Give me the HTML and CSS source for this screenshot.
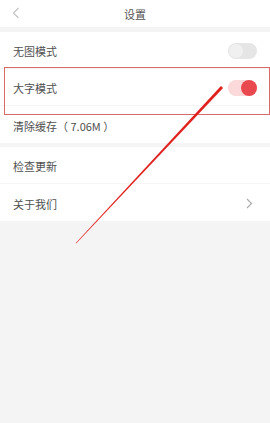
FILE: index.html
```html
<!DOCTYPE html>
<html lang="zh-CN">
<head>
  <meta charset="UTF-8">
  <meta name="viewport" content="width=device-width, initial-scale=1.0">
  <title>设置</title>
  <link rel="stylesheet" href="styles.css">
</head>
<body>
  <div class="page">
    <!-- 顶部栏 -->
    <div class="topbar">
      <span class="back">
        <svg width="8" height="12" viewBox="0 0 8 12"><path d="M6.5 1 L1.5 6 L6.5 11" fill="none" stroke="#c4c4c4" stroke-width="1.2"/></svg>
      </span>
      <span class="title">设置</span>
    </div>

    <!-- 第一组 -->
    <div class="group">
      <div class="row">
        <span class="label">无图模式</span>
        <span class="switch"><span class="knob"></span></span>
      </div>
      <div class="row">
        <span class="label">大字模式</span>
        <span class="switch on"><span class="knob"></span></span>
      </div>
      <div class="row">
        <span class="label">清除缓存（ 7.06M ）</span>
      </div>
    </div>

    <!-- 第二组 -->
    <div class="group">
      <div class="row">
        <span class="label">检查更新</span>
      </div>
      <div class="row">
        <span class="label">关于我们</span>
        <svg class="arrow-right" width="7" height="11" viewBox="0 0 7 11"><path d="M1 1 L5.5 5.5 L1 10" fill="none" stroke="#a8a8a8" stroke-width="1.1"/></svg>
      </div>
    </div>
  </div>

  <!-- 标注 -->
  <div class="mark-box"></div>
  <svg class="mark-arrow" width="270" height="423" viewBox="0 0 270 423">
    <polygon points="75.6,243.2 76.4,243.2 223.1,88 220.9,86" fill="#e0221f"/>
  </svg>
</body>
</html>
```

FILE: styles.css
```css
body {
  margin: 0;
  padding: 0;
  background: #f5f4f5;
  font-family: "Noto Sans CJK SC", "Noto Sans", sans-serif;
  color: #555;
}

.page {
  width: 270px;
}

.topbar {
  height: 27px;
  background: #fff;
  display: flex;
  justify-content: center;
  align-items: center;
  position: relative;
}

.topbar .back {
  position: absolute;
  left: 12px;
  top: 7px;
  display: flex;
}

.topbar .title {
  font-size: 11px;
  color: #555;
}

.group {
  background: #fff;
  margin-top: 5px;
}

.group + .group {
  margin-top: 4px;
}

.row {
  height: 37px;
  display: flex;
  align-items: center;
  justify-content: space-between;
  padding: 2px 12px 0 13px;
  box-sizing: border-box;
  border-bottom: 1px solid #f5f5f5;
}

.row:last-child {
  border-bottom: none;
}

.label {
  font-size: 11px;
  color: #505050;
}

.switch {
  width: 29px;
  height: 16px;
  border-radius: 8px;
  background: #e5e5e5;
  position: relative;
  margin-right: 1px;
}

.switch .knob {
  position: absolute;
  left: 1px;
  top: 1px;
  width: 14px;
  height: 14px;
  border-radius: 50%;
  background: #f0f0f0;
}

.switch.on {
  background: #fbd8da;
}

.switch.on .knob {
  left: auto;
  right: 0;
  top: 0;
  width: 16px;
  height: 16px;
  background: #e9484e;
}

.arrow-right {
  margin-right: 5px;
}

.mark-box {
  position: absolute;
  left: 4px;
  top: 67px;
  width: 264px;
  height: 46px;
  border: 1px solid #d86a6a;
}

.mark-arrow {
  position: absolute;
  left: 0;
  top: 0;
}
```
